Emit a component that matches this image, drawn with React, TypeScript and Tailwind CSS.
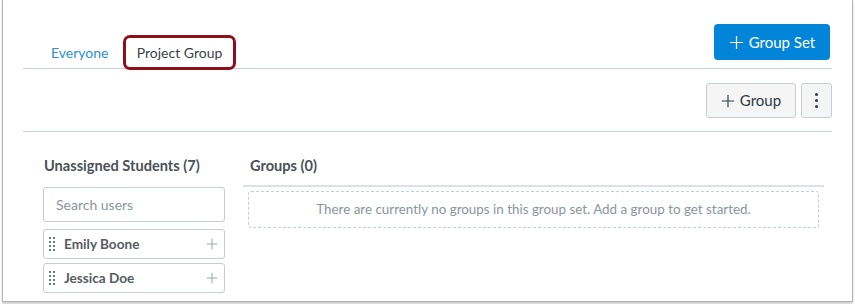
import React from "react";

const font = { fontFamily: "Lato, 'Open Sans', Arial, sans-serif" };

function Plus({ size = 15, className = "" }: { size?: number; className?: string }) {
    return (
        <svg width={size} height={size} viewBox="0 0 16 16" className={className}>
            <path d="M8 1v14M1 8h14" stroke="currentColor" strokeWidth="1.3" fill="none" />
        </svg>
    );
}

function Handle() {
    return (
        <div className="grid grid-cols-2 gap-x-[2px] gap-y-[2px] w-[6px] ml-[5px] mr-[9px]">
            {Array.from({ length: 8 }).map((_, i) => (
                <span key={i} className="block w-[2px] h-[2px] bg-[#6b7780]" />
            ))}
        </div>
    );
}

function Student({ name }: { name: string }) {
    return (
        <div className="flex items-center h-[30px] border border-[#c7cdd1] rounded-[3px] pr-[6px]">
            <Handle />
            <span className="flex-1 text-[13.6px] font-bold text-[#555c61]">{name}</span>
            <Plus size={12} className="text-[#9aa2a8]" />
        </div>
    );
}

export default function App() {
    return (
        <div className="w-[855px] h-[304px] bg-white px-[2px] pb-[2px]" style={font}>
            <div className="h-full border-x border-b border-[#b3b3b3] shadow-[0_2px_2px_rgba(0,0,0,0.2)] px-[20px]">
                {/* tabs */}
                <div className="flex justify-between items-start h-[69px] border-b border-[#c7cdd1]">
                    <div className="flex mt-[36px]">
                        <div className="w-[100px] h-[32px] pl-[28px] flex items-center text-[14px] text-[#2b8fd8]">
                            Everyone
                        </div>
                        <div className="relative w-[113px] h-[32px] flex items-center justify-center text-[14px] text-[#3b4348]">
                            Project Group
                            <span className="absolute left-0 right-0 top-[-1px] bottom-[-2px] border-[3px] border-[#8c111d] rounded-[7px]" />
                        </div>
                    </div>
                    <button className="mt-[24px] mr-[2px] w-[116px] h-[36px] rounded-[4px] bg-[#0285d9] text-white text-[15px] flex items-center justify-center gap-[5px]">
                        <Plus size={15} />
                        Group Set
                    </button>
                </div>

                {/* actions */}
                <div className="flex justify-end items-start gap-[5px] h-[63px] border-b border-[#c7cdd1] pt-[14px]">
                    <button className="w-[90px] h-[35px] rounded-[3px] bg-[#f5f5f5] border border-[#c7cdd1] text-[15px] text-[#2d3b45] flex items-center justify-center gap-[5px]">
                        <Plus size={14} />
                        Group
                    </button>
                    <button className="w-[31px] h-[35px] rounded-[3px] bg-[#f5f5f5] border border-[#c7cdd1] flex flex-col items-center justify-center gap-[3px]">
                        <span className="block w-[3px] h-[3px] rounded-full bg-[#2d3b45]" />
                        <span className="block w-[3px] h-[3px] rounded-full bg-[#2d3b45]" />
                        <span className="block w-[3px] h-[3px] rounded-full bg-[#2d3b45]" />
                    </button>
                </div>

                {/* body */}
                <div className="flex gap-[18px] pl-[20px] pr-[8px]">
                    <div className="w-[182px]">
                        <div className="mt-[24px] h-[20px] leading-[20px] text-[14.6px] font-bold text-[#4a5157] pl-[1px]">
                            Unassigned Students (7)
                        </div>
                        <div className="mt-[11px] h-[35px] border border-[#c7cdd1] rounded-[3px] flex items-center px-[12px] text-[14px] text-[#8b959c]">
                            Search users
                        </div>
                        <div className="mt-[7px] flex flex-col gap-[4px]">
                            <Student name="Emily Boone" />
                            <Student name="Jessica Doe" />
                        </div>
                    </div>
                    <div className="flex-1">
                        <div className="mt-[24px] h-[31px] leading-[20px] text-[14.6px] font-bold text-[#4a5157] border-b-2 border-[#dde1e4] pl-[7px]">
                            Groups (0)
                        </div>
                        <div className="mt-[4px] mx-[5px] h-[37px] border border-dashed border-[#c7cdd1] rounded-[3px] flex items-center justify-center text-[13.4px] text-[#8b959c]">
                            There are currently no groups in this group set. Add a group to get started.
                        </div>
                    </div>
                </div>
            </div>
        </div>
    );
}
